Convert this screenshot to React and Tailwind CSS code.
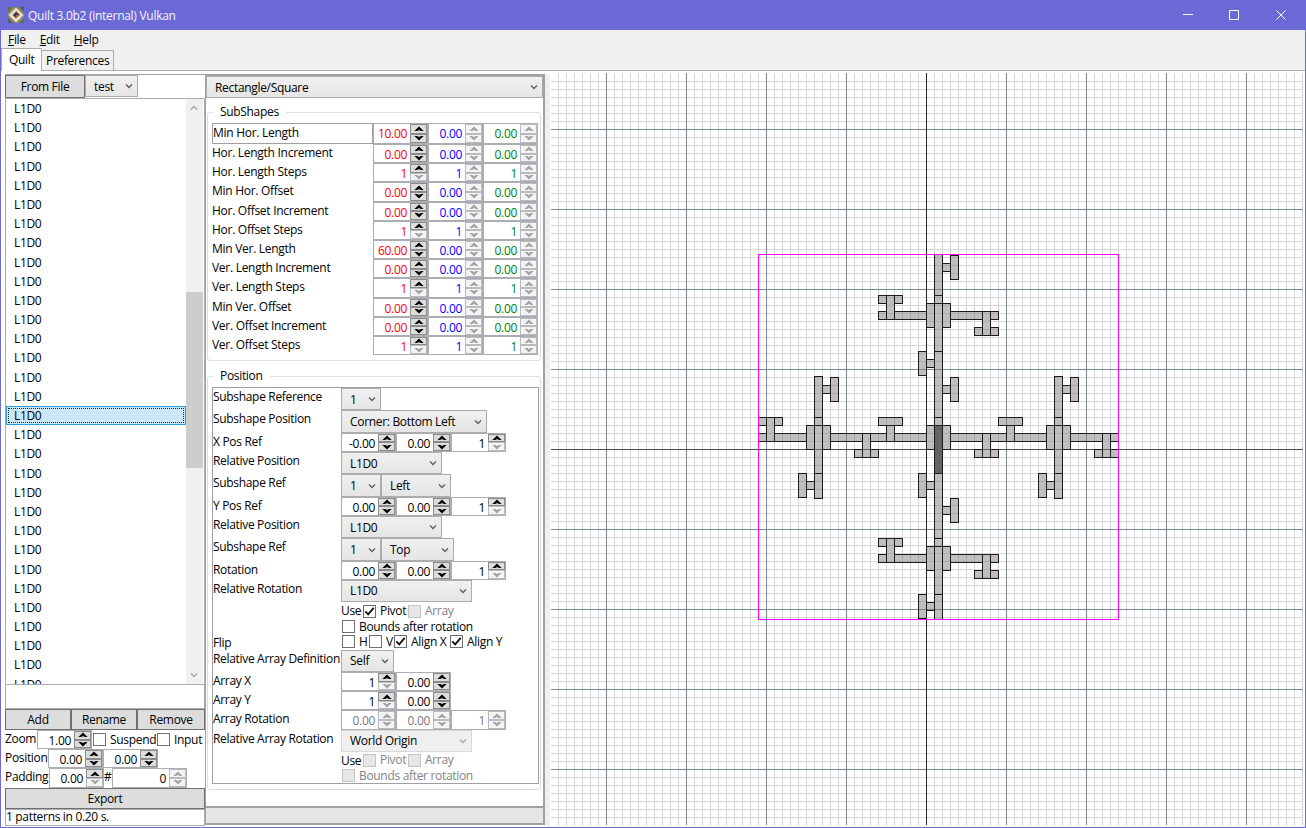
import React from "react";

const cx = (...parts) => parts.filter(Boolean).join(" ");

function Chevron({ muted, up, className }) {
  return (
    <svg width="8" height="6" viewBox="0 0 8 6" className={cx("shrink-0", className)}>
      <path
        d={up ? "M0.6 4.8 L4 1.4 L7.4 4.8" : "M1 1.4 L4 4.4 L7 1.4"}
        fill="none"
        stroke={muted ? "#a9a9a9" : "#606060"}
        strokeWidth="1.4"
      />
    </svg>
  );
}

function Combo({ children, w, h = "h-full", pl = "pl-2", muted }) {
  return (
    <div
      className={cx(
        "flex shrink-0 items-center justify-between border pr-[4px]",
        muted ? "border-[#d9d9d9] bg-[#efefef]" : "border-[#acacac] bg-linear-to-b from-[#f0f0f0] to-[#e5e5e5]",
        w, h, pl
      )}
    >
      <span className="pt-px">{children}</span>
      <Chevron muted={muted} />
    </div>
  );
}

function SpinHalf({ up, on }) {
  return (
    <div className={cx("flex flex-1 items-center justify-center border", on ? "border-[#8b8b8b] bg-[#dddddd]" : "border-[#b9bbc0] bg-[#f4f4f4]")}>
      <svg width="10" height="6" viewBox="0 0 10 6" className="shrink-0">
        <path d={up ? "M0.4 5 L5 0.6 L9.6 5 L6.8 5 L5 4 L3.2 5 Z" : "M0.4 1 L5 5.4 L9.6 1 L6.8 1 L5 2 L3.2 1 Z"} fill={on ? "#000" : "#a3a3a3"} />
      </svg>
    </div>
  );
}

/* mode: "both" | "up" | "none" tells which arrows are enabled */
function Spin({ value, mode = "both", color = "text-black", w = "w-[55px]" }) {
  return (
    <div className={cx("flex h-full shrink-0 border border-[#abadb3] bg-white", w, color)}>
      <span className="flex-1 pr-[3px] pt-[2px] text-right leading-[16px]">{value}</span>
      <div className="flex w-[17px] flex-col">
        <SpinHalf up on={mode !== "none"} />
        <SpinHalf on={mode === "both"} />
      </div>
    </div>
  );
}

function Check({ label, on, off, w }) {
  return (
    <div className={cx("flex shrink-0 items-center", w)}>
      <span className={cx("mr-[4px] flex size-[13px] shrink-0 items-center justify-center border", off ? "border-[#c4c4c4] bg-[#e6e6e6]" : "border-[#707070] bg-white")}>
        {on && (
          <svg width="11" height="11" viewBox="0 0 11 11">
            <path d="M1.3 5.4 L4.2 8.4 L9.7 1.8" fill="none" stroke="#111" strokeWidth="1.8" />
          </svg>
        )}
      </span>
      <span className={off ? "text-[#838383]" : ""}>{label}</span>
    </div>
  );
}

function Button({ children, className }) {
  return (
    <div className={cx("flex items-center justify-center border border-[#707070] bg-[#dddddd] pt-px", className)}>{children}</div>
  );
}

const subRows = [
  ["Min Hor. Length", "10.00", "0.00", "both"],
  ["Hor. Length Increment", "0.00", "0.00", "both"],
  ["Hor. Length Steps", "1", "1", "up"],
  ["Min Hor. Offset", "0.00", "0.00", "both"],
  ["Hor. Offset Increment", "0.00", "0.00", "both"],
  ["Hor. Offset Steps", "1", "1", "up"],
  ["Min Ver. Length", "60.00", "0.00", "both"],
  ["Ver. Length Increment", "0.00", "0.00", "both"],
  ["Ver. Length Steps", "1", "1", "up"],
  ["Min Ver. Offset", "0.00", "0.00", "both"],
  ["Ver. Offset Increment", "0.00", "0.00", "both"],
  ["Ver. Offset Steps", "1", "1", "up"],
];

function GroupBox({ title, className, children }) {
  return (
    <fieldset className={cx("ml-px mr-[2px] shrink-0 rounded-[3px] border border-[#d5dfe5] pl-[4px]", className)}>
      <legend className="ml-px h-[16px] px-[7px] leading-[16px]">{title}</legend>
      {children}
    </fieldset>
  );
}

function Row({ label, h, children }) {
  return (
    <div className={cx("flex shrink-0", h)}>
      <span className="w-[128px] shrink-0 whitespace-nowrap leading-[18px]">{label}</span>
      <div className="flex">{children}</div>
    </div>
  );
}

const C = "h-[22.4px]";
const S = "h-[19.2px]";
const K = "h-[15.6px]";

function PositionTable() {
  return (
    <div className="flex h-[397px] w-[327px] flex-col border border-[#a0a0a0]">
      <Row label="Subshape Reference" h={C}><Combo w="w-[40px]">1</Combo></Row>
      <Row label="Subshape Position" h={C}><Combo w="w-[146px]">Corner: Bottom Left</Combo></Row>
      <Row label="X Pos Ref" h={S}><Spin value="-0.00" /><Spin value="0.00" /><Spin value="1" mode="up" /></Row>
      <Row label="Relative Position" h={C}><Combo w="w-[101px]">L1D0</Combo></Row>
      <Row label="Subshape Ref" h={C}><Combo w="w-[40px]">1</Combo><Combo w="w-[70px]">Left</Combo></Row>
      <Row label="Y Pos Ref" h={S}><Spin value="0.00" /><Spin value="0.00" /><Spin value="1" mode="up" /></Row>
      <Row label="Relative Position" h={C}><Combo w="w-[101px]">L1D0</Combo></Row>
      <Row label="Subshape Ref" h={C}><Combo w="w-[40px]">1</Combo><Combo w="w-[73px]">Top</Combo></Row>
      <Row label="Rotation" h={S}><Spin value="0.00" /><Spin value="0.00" /><Spin value="1" mode="up" /></Row>
      <Row label="Relative Rotation" h="h-[23.4px]"><Combo w="w-[131px]" h="h-[22px]">L1D0</Combo></Row>
      <Row label="" h={K}>
        <span className="w-[22px] leading-[15px]">Use</span><Check label="Pivot" on w="w-[45px]" /><Check label="Array" off />
      </Row>
      <Row label="" h="h-[15.3px]"><Check label="Bounds after rotation" w="ml-px" /></Row>
      <Row label="Flip" h="h-[15.5px]">
        <Check label="H" w="ml-px w-[27px]" /><Check label="V" w="w-[25px]" /><Check label="Align X" on w="w-[56px]" /><Check label="Align Y" on />
      </Row>
      <Row label="Relative Array Definition" h={C}><Combo w="w-[53px]">Self</Combo></Row>
      <Row label="Array X" h={S}><Spin value="1" mode="up" /><Spin value="0.00" /></Row>
      <Row label="Array Y" h={S}><Spin value="1" mode="up" /><Spin value="0.00" /></Row>
      <Row label="Array Rotation" h={S}>
        <Spin value="0.00" mode="none" color="text-[#7a7a7a]" /><Spin value="0.00" mode="none" color="text-[#7a7a7a]" /><Spin value="1" mode="none" color="text-[#7a7a7a]" />
      </Row>
      <Row label="Relative Array Rotation" h="h-[23px]"><Combo w="w-[131px]" h="h-[22px]" muted>World Origin</Combo></Row>
      <Row label="" h="h-[15.4px]">
        <span className="w-[22px] leading-[15px]">Use</span><Check label="Pivot" off w="w-[45px]" /><Check label="Array" off />
      </Row>
      <Row label="" h="h-[15px]"><Check label="Bounds after rotation" off w="ml-px" /></Row>
    </div>
  );
}

/* Pattern geometry: [x1, y1, x2, y2] in canvas pixels */
const crossCluster = (dy) => [
  [878, 295 + dy, 886, 303 + dy], [886, 295 + dy, 894, 319 + dy], [894, 295 + dy, 902, 303 + dy],
  [878, 311 + dy, 886, 319 + dy], [894, 311 + dy, 926, 319 + dy],
  [926, 303 + dy, 934, 327 + dy], [942, 303 + dy, 950, 327 + dy],
  [950, 311 + dy, 982, 319 + dy], [982, 311 + dy, 990, 335 + dy], [990, 311 + dy, 998, 319 + dy],
  [974, 327 + dy, 982, 335 + dy], [990, 327 + dy, 998, 335 + dy],
];
const sideCluster = (dx) => [
  [814 + dx, 376, 822 + dx, 417], [814 + dx, 417, 822 + dx, 425], [814 + dx, 425, 822 + dx, 473], [814 + dx, 473, 822 + dx, 498],
  [806 + dx, 425, 814 + dx, 449], [822 + dx, 425, 830 + dx, 449],
  [822 + dx, 385, 830 + dx, 393], [830 + dx, 377, 838 + dx, 401],
  [806 + dx, 481, 814 + dx, 489], [798 + dx, 473, 806 + dx, 497],
  [830 + dx, 433, 862 + dx, 441], [862 + dx, 433, 870 + dx, 457],
  [854 + dx, 449, 862 + dx, 457], [870 + dx, 449, 878 + dx, 457],
];
const shapes = [
  ...crossCluster(0), ...crossCluster(243), ...sideCluster(0),
  ...sideCluster(240), [1110, 433, 1118, 441],
  [934, 254, 942, 295], [934, 295, 942, 303], [934, 303, 942, 351], [934, 351, 942, 417], [934, 417, 942, 425],
  [934, 473, 942, 538], [934, 538, 942, 546], [934, 546, 942, 594], [934, 594, 942, 619],
  [926, 425, 934, 449], [942, 425, 950, 449],
  [942, 263, 950, 271], [950, 255, 958, 279], [926, 359, 934, 367], [918, 351, 926, 375],
  [942, 385, 950, 393], [950, 377, 958, 401], [926, 481, 934, 489], [918, 473, 926, 497],
  [942, 506, 950, 514], [950, 498, 958, 522], [926, 602, 934, 610], [918, 594, 926, 618],
  [758, 417, 766, 425], [766, 417, 774, 441], [774, 417, 782, 425], [758, 433, 766, 441], [774, 433, 806, 441],
  [870, 433, 886, 441], [886, 425, 894, 441], [878, 417, 902, 425], [894, 433, 926, 441],
  [950, 433, 982, 441], [982, 433, 990, 457], [974, 449, 982, 457], [990, 449, 998, 457],
  [990, 433, 1006, 441], [1006, 425, 1014, 441], [998, 417, 1022, 425], [1014, 433, 1046, 441],
];

const span = (from, to) => Array.from({ length: Math.floor((to - from) / 8) + 1 }, (_, i) => from + i * 8);

function Canvas() {
  const xs = span(558, 1302);
  const ys = span(81, 824);
  return (
    <svg width="752" height="752" viewBox="551 73 752 752" className="block shrink-0 bg-white" shapeRendering="crispEdges">
      {ys.map((y) => <rect key={y} x="551" y={y} width="752" height="1" fill="#d8d8d8" />)}
      {xs.map((x) => <rect key={x} x={x} y="73" width="1" height="752" fill="#d3d3d3" />)}
      {ys.filter((y) => (y - 129) % 80 === 0).map((y) => <rect key={y} x="551" y={y} width="752" height="1" fill="#778899" />)}
      {xs.filter((x) => (x - 606) % 80 === 0).map((x) => <rect key={x} x={x} y="73" width="1" height="752" fill="#778899" />)}
      <rect x="551" y="449" width="752" height="1" fill="#4c4c4c" />
      <rect x="926" y="73" width="1" height="752" fill="#222222" />
      {shapes.map(([a, b, c, d], i) => (
        <rect key={i} x={a} y={b} width={c - a} height={d - b} fill="#808080" fillOpacity="0.5" />
      ))}
      <rect x="934" y="425" width="8" height="48" fill="#646464" />
      {[...shapes, [934, 425, 942, 473]].map(([a, b, c, d], i) => (
        <path key={i} d={`M${a} ${b}H${c + 1}V${d + 1}H${a}Z M${a + 1} ${b + 1}V${d}H${c}V${b + 1}Z`} fillRule="evenodd" fill="#1c1c1c" />
      ))}
      <path d="M758 254H1119V620H758Z M759 255V619H1118V255Z" fillRule="evenodd" fill="#ff00ff" />
    </svg>
  );
}

function LeftPanel() {
  return (
    <div className="flex w-[200px] shrink-0 flex-col">
      <div className="flex h-[24px] shrink-0 items-start border-t border-[#a0a0a0]">
        <Button className="h-[23px] w-[80px]">From File</Button>
        <Combo w="w-[53px]" h="h-[22px]">test</Combo>
      </div>
      <div className="flex h-[587px] shrink-0 border border-[#abadb3]">
        <div className="flex min-w-0 flex-1 flex-col overflow-hidden">
          {Array.from({ length: 31 }, (_, i) =>
            i === 16 ? (
              <div key={i} className="h-[19.2px] w-[180px] shrink-0 border border-[#26a0da] bg-[#cbe8f6] p-px">
                <div className="h-full border border-dotted border-[#222222] pl-[5px] leading-[14px]">L1D0</div>
              </div>
            ) : (
              <div key={i} className="h-[19.2px] w-[180px] shrink-0 pl-[8px] leading-[20px]">L1D0</div>
            )
          )}
        </div>
        <div className="mr-px flex w-[17px] shrink-0 flex-col items-center bg-[#f0f0f0] py-[6px] pr-px">
          <Chevron up muted />
          <div className="-mr-px mt-[181px] h-[176px] w-[17px] bg-[#cdcdcd]" />
          <Chevron muted className="mt-auto" />
        </div>
      </div>
      <div className="h-[24px] shrink-0 border border-t-0 border-[#abadb3]" />
      <div className="flex h-[21px] shrink-0">
        <Button className="w-[66px]">Add</Button>
        <Button className="w-[66px]">Rename</Button>
        <Button className="w-[68px]">Remove</Button>
      </div>
      <div className="flex h-[19.2px] shrink-0">
        <span className="w-[32px] leading-[18px]">Zoom</span>
        <Spin value="1.00" w="w-[55px]" />
        <Check label="Suspend" w="w-[64px] ml-px" />
        <Check label="Input" />
      </div>
      <div className="flex h-[19.2px] shrink-0">
        <span className="w-[43px] leading-[18px]">Position</span>
        <Spin value="0.00" /><Spin value="0.00" />
      </div>
      <div className="flex h-[19.2px] shrink-0">
        <span className="w-[44px] leading-[18px]">Padding</span>
        <Spin value="0.00" mode="up" />
        <span className="w-[8px] leading-[18px]">#</span>
        <Spin value="0" mode="none" w="w-[75px]" />
      </div>
      <Button className="h-[21px] shrink-0">Export</Button>
      <div className="h-[17px] shrink-0 border border-[#abadb3] leading-[14px]">1 patterns in 0.20 s.</div>
    </div>
  );
}

function MiddlePanel() {
  return (
    <div className="flex w-[340px] shrink-0 flex-col border-2 border-l border-[#a0a0a0] bg-white">
      <Combo w="w-full" h="h-[22px]" pl="pl-[8px]">Rectangle/Square</Combo>
      <GroupBox title="SubShapes" className="mt-[6px] h-[257px]">
        <div className="mt-[3px] flex w-[327px] flex-col">
          {subRows.map(([label, a, b, mode], i) => (
            <div key={label} className={cx("flex", i === 0 ? "h-[21px]" : "h-[19.2px]")}>
              <span className={cx("w-[161px] tracking-[-0.28px]", i === 0 ? "border border-[#a0a0a0] leading-[17px]" : "leading-[18px]")}>{label}</span>
              <Spin value={a} mode={mode} color="text-[#ff0000]" />
              <Spin value={b} mode="none" color="text-[#0000ff]" />
              <Spin value={b} mode="none" color="text-[#008000]" />
            </div>
          ))}
        </div>
      </GroupBox>
      <GroupBox title="Position" className="mt-[7px] h-[422px]">
        <div className="mt-[3px]"><PositionTable /></div>
      </GroupBox>
      <div className="mt-auto h-[17px] shrink-0 border-t-2 border-[#a0a0a0] bg-[#e6e6e6]" />
    </div>
  );
}

function Logo() {
  return (
    <svg width="16" height="16" viewBox="0 0 16 16">
      <rect width="16" height="16" fill="#8b8468" />
      <path d="M0 0h5L0 5zM16 16h-5l5-5z" fill="#5d6f4c" />
      <path d="M16 0v5l-5-5zM0 16v-5l5 5z" fill="#4d5f7c" />
      <path d="M8 0.5L15.5 8L8 15.5L0.5 8Z" fill="#e9e0c8" />
      <path d="M8 4L12 8L8 12L4 8Z" fill="#c1aa8c" />
      <path d="M8 4L12 8H8Z" fill="#a3523b" />
      <path d="M8 5L11 8L8 11L5 8Z" fill="#343b52" />
      <path d="M8 8L11 8L8 11Z" fill="#b46a42" />
    </svg>
  );
}

export default function App() {
  return (
    <div className="flex h-[828px] w-[1306px] flex-col overflow-hidden whitespace-nowrap border border-t-0 border-[#6b69d6] bg-[#f0f0f0] font-['Open_Sans','Noto_Sans',sans-serif] text-[12px] leading-[16px] tracking-[-0.32px] text-black">
      <div className="flex h-[30px] shrink-0 items-center bg-[#6b69d6] pl-[7px] text-[#f4f4ff]">
        <Logo />
        <span className="ml-[4px] pt-px tracking-[-0.28px]">Quilt 3.0b2 (internal) Vulkan</span>
        <svg width="105" height="12" viewBox="0 0 105 12" className="ml-auto mr-[18px]" fill="none" stroke="#fff" strokeWidth="1">
          <path d="M1 5.5h10" />
          <path d="M47.5 1.5h9v9h-9z" />
          <path d="M94.5 1.5l9 9M103.5 1.5l-9 9" />
        </svg>
      </div>
      <div className="flex h-[19px] shrink-0 items-center gap-[14px] pl-[7px]">
        <span><u>F</u>ile</span>
        <span><u>E</u>dit</span>
        <span><u>H</u>elp</span>
      </div>
      <div className="flex h-[22px] shrink-0 items-end border-b border-[#acacac]">
        <div className="-mb-px h-[23px] w-[41px] border border-b-0 border-[#acacac] bg-white pl-[7px] leading-[21px]">Quilt</div>
        <div className="h-[20px] w-[72px] border border-b-0 border-l-0 border-[#acacac] pl-[4px] leading-[20px]">Preferences</div>
      </div>
      <div className="flex flex-1 bg-white pl-[4px] pt-[3px]">
        <LeftPanel />
        <div className="flex h-[751px]"><MiddlePanel /></div>
        <div className="h-[752px] w-[6px] shrink-0 border-r border-white bg-[#f0f0f0]" />
        <div className="-mt-px"><Canvas /></div>
      </div>
    </div>
  );
}
